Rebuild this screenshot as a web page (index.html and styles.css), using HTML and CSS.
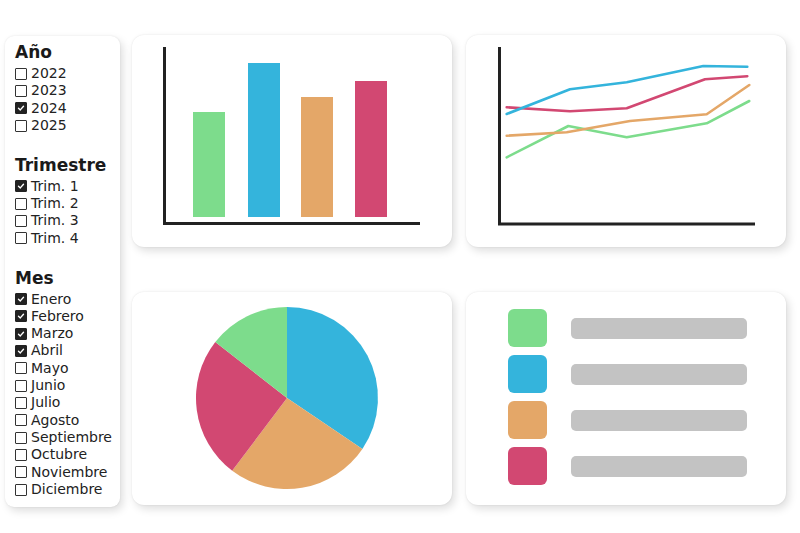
FILE: index.html
```html
<!DOCTYPE html>
<html lang="es">
<head>
<meta charset="utf-8">
<title>Dashboard</title>
<link rel="stylesheet" href="styles.css">
</head>
<body>
<div class="page">
  <aside class="sidebar">
    <section class="group">
      <h2 class="group-title">Año</h2>
      <ul class="options">
        <li class="option"><span class="box"></span>2022</li>
        <li class="option"><span class="box"></span>2023</li>
        <li class="option"><span class="box checked"><svg viewBox="0 0 12 12"><polyline points="3.5,6.2 5.3,7.9 8.5,4.3"/></svg></span>2024</li>
        <li class="option"><span class="box"></span>2025</li>
      </ul>
    </section>
    <section class="group">
      <h2 class="group-title">Trimestre</h2>
      <ul class="options">
        <li class="option"><span class="box checked"><svg viewBox="0 0 12 12"><polyline points="3.5,6.2 5.3,7.9 8.5,4.3"/></svg></span>Trim. 1</li>
        <li class="option"><span class="box"></span>Trim. 2</li>
        <li class="option"><span class="box"></span>Trim. 3</li>
        <li class="option"><span class="box"></span>Trim. 4</li>
      </ul>
    </section>
    <section class="group">
      <h2 class="group-title">Mes</h2>
      <ul class="options">
        <li class="option"><span class="box checked"><svg viewBox="0 0 12 12"><polyline points="3.5,6.2 5.3,7.9 8.5,4.3"/></svg></span>Enero</li>
        <li class="option"><span class="box checked"><svg viewBox="0 0 12 12"><polyline points="3.5,6.2 5.3,7.9 8.5,4.3"/></svg></span>Febrero</li>
        <li class="option"><span class="box checked"><svg viewBox="0 0 12 12"><polyline points="3.5,6.2 5.3,7.9 8.5,4.3"/></svg></span>Marzo</li>
        <li class="option"><span class="box checked"><svg viewBox="0 0 12 12"><polyline points="3.5,6.2 5.3,7.9 8.5,4.3"/></svg></span>Abril</li>
        <li class="option"><span class="box"></span>Mayo</li>
        <li class="option"><span class="box"></span>Junio</li>
        <li class="option"><span class="box"></span>Julio</li>
        <li class="option"><span class="box"></span>Agosto</li>
        <li class="option"><span class="box"></span>Septiembre</li>
        <li class="option"><span class="box"></span>Octubre</li>
        <li class="option"><span class="box"></span>Noviembre</li>
        <li class="option"><span class="box"></span>Diciembre</li>
      </ul>
    </section>
  </aside>

  <main class="grid">
    <div class="card">
      <svg class="chart" viewBox="0 0 320 212" width="320" height="212">
        <rect x="61" y="77" width="32" height="105" fill="#7ddc8c"/>
        <rect x="116" y="28" width="32" height="154" fill="#34b4dc"/>
        <rect x="169" y="62" width="32" height="120" fill="#e4a768"/>
        <rect x="223" y="46" width="32" height="136" fill="#d24872"/>
        <polyline class="axis" points="32.5,12 32.5,188.5 288,188.5"/>
      </svg>
    </div>
    <div class="card">
      <svg class="chart" viewBox="0 0 320 212" width="320" height="212">
        <polyline class="line" stroke="#7ddc8c" points="40.7,122.3 102.3,91 160.7,102.3 240.7,88.3 283.3,66"/>
        <polyline class="line" stroke="#e4a768" points="40.7,100.7 100.7,97.3 164,86 240.7,79.3 283.3,50"/>
        <polyline class="line" stroke="#d24872" points="40.7,72.3 104,76.3 160.7,73.3 239,44.3 281.3,41.3"/>
        <polyline class="line" stroke="#34b4dc" points="40.7,79 104,54.3 160.7,47.3 237.3,31 281.3,31.7"/>
        <polyline class="axis" points="33.5,12 33.5,189 289,189"/>
      </svg>
    </div>
    <div class="card">
      <svg class="chart" viewBox="0 0 320 213" width="320" height="213">
        <path d="M155,106 L155,15 A91,91 0 0 1 230.4,156.9 Z" fill="#34b4dc"/>
        <path d="M155,106 L230.4,156.9 A91,91 0 0 1 100.2,178.7 Z" fill="#e4a768"/>
        <path d="M155,106 L100.2,178.7 A91,91 0 0 1 83.3,50 Z" fill="#d24872"/>
        <path d="M155,106 L83.3,50 A91,91 0 0 1 155,15 Z" fill="#7ddc8c"/>
      </svg>
    </div>
    <div class="card legend">
      <div class="legend-row"><span class="swatch green"></span><span class="placeholder"></span></div>
      <div class="legend-row"><span class="swatch blue"></span><span class="placeholder"></span></div>
      <div class="legend-row"><span class="swatch orange"></span><span class="placeholder"></span></div>
      <div class="legend-row"><span class="swatch red"></span><span class="placeholder"></span></div>
    </div>
  </main>
</div>
</body>
</html>
```

FILE: styles.css
```css
* { box-sizing: border-box; }

html, body {
  margin: 0;
  padding: 0;
  background: #ffffff;
}

body {
  font-family: "DejaVu Sans", "Noto Sans", sans-serif;
  color: #1e1e1e;
  width: 800px;
  height: 533px;
  overflow: hidden;
}

.page {
  display: flex;
  align-items: flex-start;
  gap: 12px;
  padding: 35px 0 0 5px;
}

.sidebar {
  margin-top: 1px;
  width: 115px;
  height: 471px;
  padding: 6px 0 0 10px;
  background: #ffffff;
  border-radius: 9px;
  box-shadow: 0 0 2px rgba(0, 0, 0, 0.10), 3px 4px 8px rgba(0, 0, 0, 0.13);
  display: flex;
  flex-direction: column;
  gap: 20.5px;
}

.group-title {
  margin: 0 0 3px 0;
  font-size: 17px;
  line-height: 20px;
  font-weight: bold;
  color: #1a1a1a;
}

.options {
  list-style: none;
  margin: 0;
  padding: 0;
}

.option {
  display: flex;
  align-items: center;
  gap: 4px;
  font-size: 14px;
  line-height: 17.32px;
  height: 17.32px;
  color: #222;
  white-space: nowrap;
}

.box {
  width: 12px;
  height: 12px;
  border: 1px solid #333;
  border-radius: 1px;
  background: #fff;
  flex: none;
  display: flex;
  align-items: center;
  justify-content: center;
}

.box.checked {
  background: #222;
  border-color: #222;
}

.box svg {
  width: 12px;
  height: 12px;
  flex: none;
}

.box svg polyline {
  fill: none;
  stroke: #fff;
  stroke-width: 1.4;
  stroke-linecap: round;
  stroke-linejoin: round;
}

.grid {
  display: grid;
  grid-template-columns: 320px 320px;
  grid-template-rows: 212px 213px;
  column-gap: 14px;
  row-gap: 45px;
}

.card {
  background: #ffffff;
  border-radius: 12px;
  box-shadow: 0 0 2px rgba(0, 0, 0, 0.10), 3px 4px 8px rgba(0, 0, 0, 0.13);
  overflow: hidden;
}

.chart {
  display: block;
}

.axis {
  fill: none;
  stroke: #222;
  stroke-width: 3;
}

.line {
  fill: none;
  stroke-width: 2.6;
  stroke-linejoin: round;
  stroke-linecap: round;
}

.legend {
  display: flex;
  flex-direction: column;
  gap: 8px;
  padding: 17px 0 0 42px;
}

.legend-row {
  display: flex;
  align-items: center;
  gap: 24px;
}

.swatch {
  width: 39px;
  height: 38px;
  border-radius: 6px;
  flex: none;
}

.swatch.green { background: #7ddc8c; }
.swatch.blue { background: #34b4dc; }
.swatch.orange { background: #e4a768; }
.swatch.red { background: #d24872; }

.placeholder {
  width: 176px;
  height: 21px;
  border-radius: 5px;
  background: #c3c3c3;
}
```
